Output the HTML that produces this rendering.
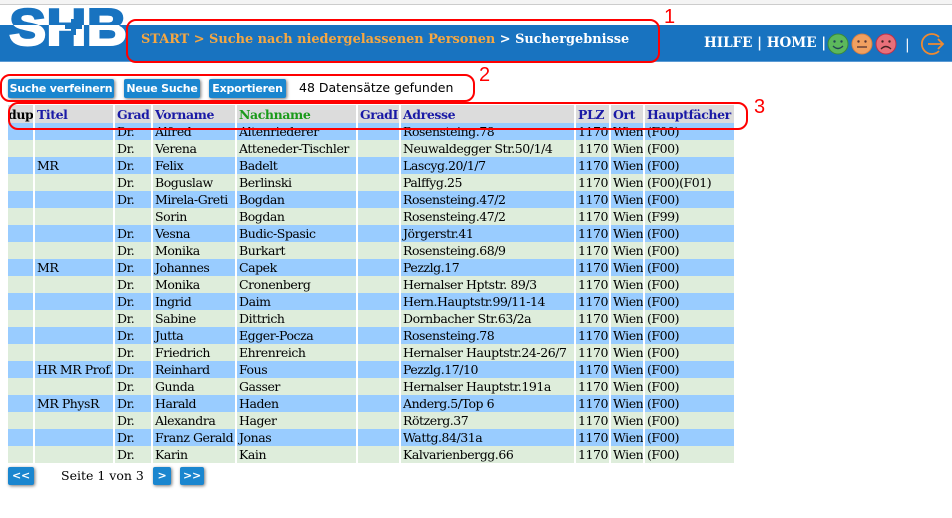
<!DOCTYPE html>
<html><head><meta charset="utf-8"><style>
body{margin:0;width:952px;height:518px;background:#fff;position:relative;overflow:hidden;font-family:"DejaVu Serif","Liberation Serif",serif}
.top{position:absolute;left:0;top:0;width:952px;height:4px;border-bottom:1px solid #ccc;background:#f4f4f4}
.bar{position:absolute;left:0;top:25px;width:952px;height:36px;background:#1873c0;border-bottom:1px solid #5a9ad4}
.crumb{position:absolute;left:141px;top:32px;font-size:12.9px;font-weight:bold;color:#f5a742;white-space:nowrap}
.crumb b{color:#fff}
.nav{position:absolute;left:704px;top:35px;font-size:13.5px;font-weight:bold;color:#fff;white-space:nowrap}
.btn{position:absolute;top:79px;height:19px;background:#1a86cf;color:#fff;font:bold 11px "DejaVu Sans",sans-serif;line-height:19px;text-align:center;border-radius:2px;box-shadow:1px 1px 3px #777;white-space:nowrap;overflow:hidden;letter-spacing:-0.2px}
.cnt{position:absolute;left:299px;top:80px;font:12.5px "DejaVu Sans",sans-serif}
table{position:absolute;left:8px;top:105px;border-collapse:collapse;font-size:12.5px;table-layout:fixed;width:727px}
td{height:17px;padding:0 0 0 2px;border-right:2px solid #fff;white-space:nowrap;line-height:17px;overflow:hidden;letter-spacing:-0.45px}
th{height:18px;padding:0 0 0 2px;border-right:2px solid #fff;background:#dcdcdc;color:#1a1aa6;text-align:left;font-size:12.5px;white-space:nowrap;overflow:hidden;letter-spacing:-0.4px}
tr.b td{background:#99ccff}
tr.g td{background:#deeddb}
.red{position:absolute;border:2.5px solid #f00;border-radius:10px}
.num{position:absolute;color:#f00;font:20px "Liberation Sans",sans-serif}
.pg{position:absolute;top:468px;font-size:12.5px}
</style></head><body>
<div class="top"></div>
<div class="bar"></div>
<svg style="position:absolute;left:8px;top:4px" width="124" height="46">
<defs><clipPath id="t"><rect x="0" y="0" width="124" height="21"/></clipPath><clipPath id="bt"><rect x="0" y="21" width="124" height="30"/></clipPath></defs>
<g font-family="Liberation Sans,sans-serif" font-weight="bold" font-size="52">
<text x="1" y="41" fill="#1873c0" clip-path="url(#t)" textLength="118" lengthAdjust="spacingAndGlyphs" stroke="#1873c0" stroke-width="2">SHB</text>
<text x="1" y="41" fill="#fff" clip-path="url(#bt)" textLength="118" lengthAdjust="spacingAndGlyphs" stroke="#fff" stroke-width="2">SHB</text>
</g>
<rect x="63" y="15" width="5" height="16" fill="#1873c0"/><rect x="57" y="20" width="17" height="5" fill="#1873c0"/>
</svg>
<div class="crumb">START &gt; Suche nach niedergelassenen Personen <b>&gt; Suchergebnisse</b></div>
<div class="nav">HILFE | HOME |</div>
<svg style="position:absolute;left:826px;top:32px" width="120" height="26">
<circle cx="12" cy="12" r="10" fill="#5cb85c" stroke="#3a8a3a"/><circle cx="8.5" cy="9.5" r="1.2" fill="#245"/><circle cx="15.5" cy="9.5" r="1.2" fill="#245"/><path d="M7 14q5 5 10 0" stroke="#245" fill="none" stroke-width="1.3"/>
<circle cx="36" cy="12" r="10" fill="#f0a060" stroke="#d88040"/><circle cx="32.5" cy="9.5" r="1.2" fill="#533"/><circle cx="39.5" cy="9.5" r="1.2" fill="#533"/><path d="M31 15h10" stroke="#533" stroke-width="1.3"/>
<circle cx="60" cy="12" r="10" fill="#e8707a" stroke="#c03048"/><circle cx="56.5" cy="9.5" r="1.2" fill="#422"/><circle cx="63.5" cy="9.5" r="1.2" fill="#422"/><path d="M55 17q5 -5 10 0" stroke="#422" fill="none" stroke-width="1.3"/>
<text x="79" y="17" fill="#fff" font-size="14" font-family="DejaVu Serif">|</text>
<path d="M113 5a10 10 0 1 0 0 14" stroke="#f08a30" stroke-width="1.8" fill="none"/><path d="M102 12h15M112 7l5 5-5 5" stroke="#f08a30" stroke-width="1.8" fill="none"/>
</svg>
<div class="btn" style="left:8px;width:106px">Suche verfeinern</div>
<div class="btn" style="left:124px;width:76px">Neue Suche</div>
<div class="btn" style="left:209px;width:77px">Exportieren</div>
<div class="cnt">48 Datensätze gefunden</div>
<table>
<colgroup><col style="width:26px"><col style="width:80px"><col style="width:38px"><col style="width:84px"><col style="width:121px"><col style="width:43px"><col style="width:175px"><col style="width:35px"><col style="width:34px"><col style="width:91px"></colgroup>
<tr><th style="color:#000;padding:0">dup</th><th>Titel</th><th>Grad</th><th>Vorname</th><th style="color:#1a9a1a">Nachname</th><th>GradI</th><th>Adresse</th><th>PLZ</th><th>Ort</th><th>Hauptfächer</th></tr>
<tr class="b"><td></td><td></td><td>Dr.</td><td>Alfred</td><td>Altenriederer</td><td></td><td>Rosensteing.78</td><td>1170</td><td>Wien</td><td>(F00)</td></tr>
<tr class="g"><td></td><td></td><td>Dr.</td><td>Verena</td><td>Atteneder-Tischler</td><td></td><td>Neuwaldegger Str.50/1/4</td><td>1170</td><td>Wien</td><td>(F00)</td></tr>
<tr class="b"><td></td><td>MR</td><td>Dr.</td><td>Felix</td><td>Badelt</td><td></td><td>Lascyg.20/1/7</td><td>1170</td><td>Wien</td><td>(F00)</td></tr>
<tr class="g"><td></td><td></td><td>Dr.</td><td>Boguslaw</td><td>Berlinski</td><td></td><td>Palffyg.25</td><td>1170</td><td>Wien</td><td>(F00)(F01)</td></tr>
<tr class="b"><td></td><td></td><td>Dr.</td><td>Mirela-Greti</td><td>Bogdan</td><td></td><td>Rosensteing.47/2</td><td>1170</td><td>Wien</td><td>(F00)</td></tr>
<tr class="g"><td></td><td></td><td></td><td>Sorin</td><td>Bogdan</td><td></td><td>Rosensteing.47/2</td><td>1170</td><td>Wien</td><td>(F99)</td></tr>
<tr class="b"><td></td><td></td><td>Dr.</td><td>Vesna</td><td>Budic-Spasic</td><td></td><td>Jörgerstr.41</td><td>1170</td><td>Wien</td><td>(F00)</td></tr>
<tr class="g"><td></td><td></td><td>Dr.</td><td>Monika</td><td>Burkart</td><td></td><td>Rosensteing.68/9</td><td>1170</td><td>Wien</td><td>(F00)</td></tr>
<tr class="b"><td></td><td>MR</td><td>Dr.</td><td>Johannes</td><td>Capek</td><td></td><td>Pezzlg.17</td><td>1170</td><td>Wien</td><td>(F00)</td></tr>
<tr class="g"><td></td><td></td><td>Dr.</td><td>Monika</td><td>Cronenberg</td><td></td><td>Hernalser Hptstr. 89/3</td><td>1170</td><td>Wien</td><td>(F00)</td></tr>
<tr class="b"><td></td><td></td><td>Dr.</td><td>Ingrid</td><td>Daim</td><td></td><td>Hern.Hauptstr.99/11-14</td><td>1170</td><td>Wien</td><td>(F00)</td></tr>
<tr class="g"><td></td><td></td><td>Dr.</td><td>Sabine</td><td>Dittrich</td><td></td><td>Dornbacher Str.63/2a</td><td>1170</td><td>Wien</td><td>(F00)</td></tr>
<tr class="b"><td></td><td></td><td>Dr.</td><td>Jutta</td><td>Egger-Pocza</td><td></td><td>Rosensteing.78</td><td>1170</td><td>Wien</td><td>(F00)</td></tr>
<tr class="g"><td></td><td></td><td>Dr.</td><td>Friedrich</td><td>Ehrenreich</td><td></td><td>Hernalser Hauptstr.24-26/7</td><td>1170</td><td>Wien</td><td>(F00)</td></tr>
<tr class="b"><td></td><td>HR MR Prof.</td><td>Dr.</td><td>Reinhard</td><td>Fous</td><td></td><td>Pezzlg.17/10</td><td>1170</td><td>Wien</td><td>(F00)</td></tr>
<tr class="g"><td></td><td></td><td>Dr.</td><td>Gunda</td><td>Gasser</td><td></td><td>Hernalser Hauptstr.191a</td><td>1170</td><td>Wien</td><td>(F00)</td></tr>
<tr class="b"><td></td><td>MR PhysR</td><td>Dr.</td><td>Harald</td><td>Haden</td><td></td><td>Anderg.5/Top 6</td><td>1170</td><td>Wien</td><td>(F00)</td></tr>
<tr class="g"><td></td><td></td><td>Dr.</td><td>Alexandra</td><td>Hager</td><td></td><td>Rötzerg.37</td><td>1170</td><td>Wien</td><td>(F00)</td></tr>
<tr class="b"><td></td><td></td><td>Dr.</td><td>Franz Gerald</td><td>Jonas</td><td></td><td>Wattg.84/31a</td><td>1170</td><td>Wien</td><td>(F00)</td></tr>
<tr class="g"><td></td><td></td><td>Dr.</td><td>Karin</td><td>Kain</td><td></td><td>Kalvarienbergg.66</td><td>1170</td><td>Wien</td><td>(F00)</td></tr>
</table>
<div class="btn" style="left:8px;top:467px;height:18px;line-height:18px;width:26px">&lt;&lt;</div>
<div class="pg" style="left:61px">Seite 1 von 3</div>
<div class="btn" style="left:153px;top:467px;height:18px;line-height:18px;width:18px">&gt;</div>
<div class="btn" style="left:180px;top:467px;height:18px;line-height:18px;width:24px">&gt;&gt;</div>
<div class="red" style="left:126px;top:19px;width:530px;height:40px"></div>
<div class="red" style="left:0;top:74px;width:471px;height:24px"></div>
<div class="red" style="left:8px;top:102px;width:736px;height:24px"></div>
<div class="num" style="left:664px;top:6px">1</div>
<div class="num" style="left:479px;top:64px">2</div>
<div class="num" style="left:754px;top:96px">3</div>
</body></html>
